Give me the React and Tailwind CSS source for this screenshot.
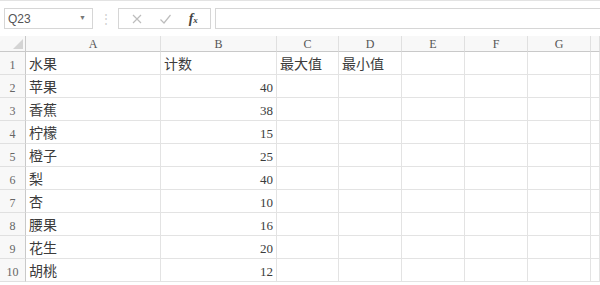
import React from 'react';

const cols = ['A', 'B', 'C', 'D', 'E', 'F', 'G', ''];

const rows = [
  ['水果', '计数', '最大值', '最小值'],
  ['苹果', 40],
  ['香蕉', 38],
  ['柠檬', 15],
  ['橙子', 25],
  ['梨', 40],
  ['杏', 10],
  ['腰果', 16],
  ['花生', 20],
  ['胡桃', 12],
];

const font = { fontFamily: '"Liberation Serif", "Noto Sans CJK SC", serif' };

const App = () => {
  return (
    <div className="w-[600px] h-[285px] overflow-hidden bg-white text-[#3c3c3c]" style={font}>
      {/* Formula bar */}
      <div className="h-[36px] border-t border-[#e3e3e3] flex items-start pt-[7px]">
        <div className="ml-[4px] w-[89px] h-[21px] border border-[#d6d6d6] flex items-center justify-between px-[3px]">
          <span className="text-[12px] text-[#555] font-['Liberation_Sans',sans-serif]">Q23</span>
          <span className="text-[7px] text-[#777] mr-[3px]">▼</span>
        </div>
        <div className="w-[25px] h-[21px] flex items-center justify-center text-[#d0d0d0] text-[12px]">⋮</div>
        <div className="w-[93px] h-[21px] border border-[#d6d6d6] flex items-center justify-around px-[4px]">
          <svg width="12" height="12" viewBox="0 0 12 12">
            <path d="M2 2 L10 10 M10 2 L2 10" stroke="#bdbdbd" strokeWidth="1.2" fill="none" />
          </svg>
          <svg width="13" height="12" viewBox="0 0 13 12">
            <path d="M1.5 6.5 L5 10 L11.5 2" stroke="#bdbdbd" strokeWidth="1.2" fill="none" />
          </svg>
          <span className="italic text-[14px] text-[#444] leading-none font-bold">
            f<span className="text-[9px]">x</span>
          </span>
        </div>
        <div className="ml-[4px] flex-1 h-[21px] border border-[#d6d6d6] border-r-0"></div>
      </div>

      {/* Sheet grid */}
      <div className="grid grid-cols-[26px_135px_116px_62px_63px_63px_63px_63px_1fr]">
        <div className="h-[16px] border-b border-r border-[#c9c9c9] bg-[#f8f8f8] relative">
          <div className="absolute right-[2px] bottom-[2px] w-0 h-0 border-l-[10px] border-l-transparent border-b-[10px] border-b-[#d4d4d4]"></div>
        </div>
        {cols.map((c, i) => (
          <div
            key={i}
            className="h-[16px] border-b border-r border-[#e0e0e0] border-b-[#c9c9c9] bg-[#f8f8f8] flex items-center justify-center text-[12px] text-[#555] leading-none"
          >
            {c}
          </div>
        ))}

        {rows.map((r, ri) => (
          <React.Fragment key={ri}>
            <div className="h-[23px] border-b border-r border-[#e0e0e0] border-r-[#c9c9c9] bg-[#f8f8f8] flex items-end justify-center pb-[2px] text-[12px] leading-[14px] text-[#666]">
              {ri + 1}
            </div>
            {cols.map((c, ci) => {
              const v = r[ci];
              const num = typeof v === 'number';
              return (
                <div
                  key={ci}
                  className={`h-[23px] border-b border-r border-[#e3e3e3] flex items-end pb-[2px] leading-[14px] whitespace-nowrap overflow-hidden ${
                    num ? 'justify-end pr-[3px] text-[13px]' : 'pl-[3px] text-[14px]'
                  }`}
                >
                  {v}
                </div>
              );
            })}
          </React.Fragment>
        ))}
      </div>
    </div>
  );
};

export default App;
